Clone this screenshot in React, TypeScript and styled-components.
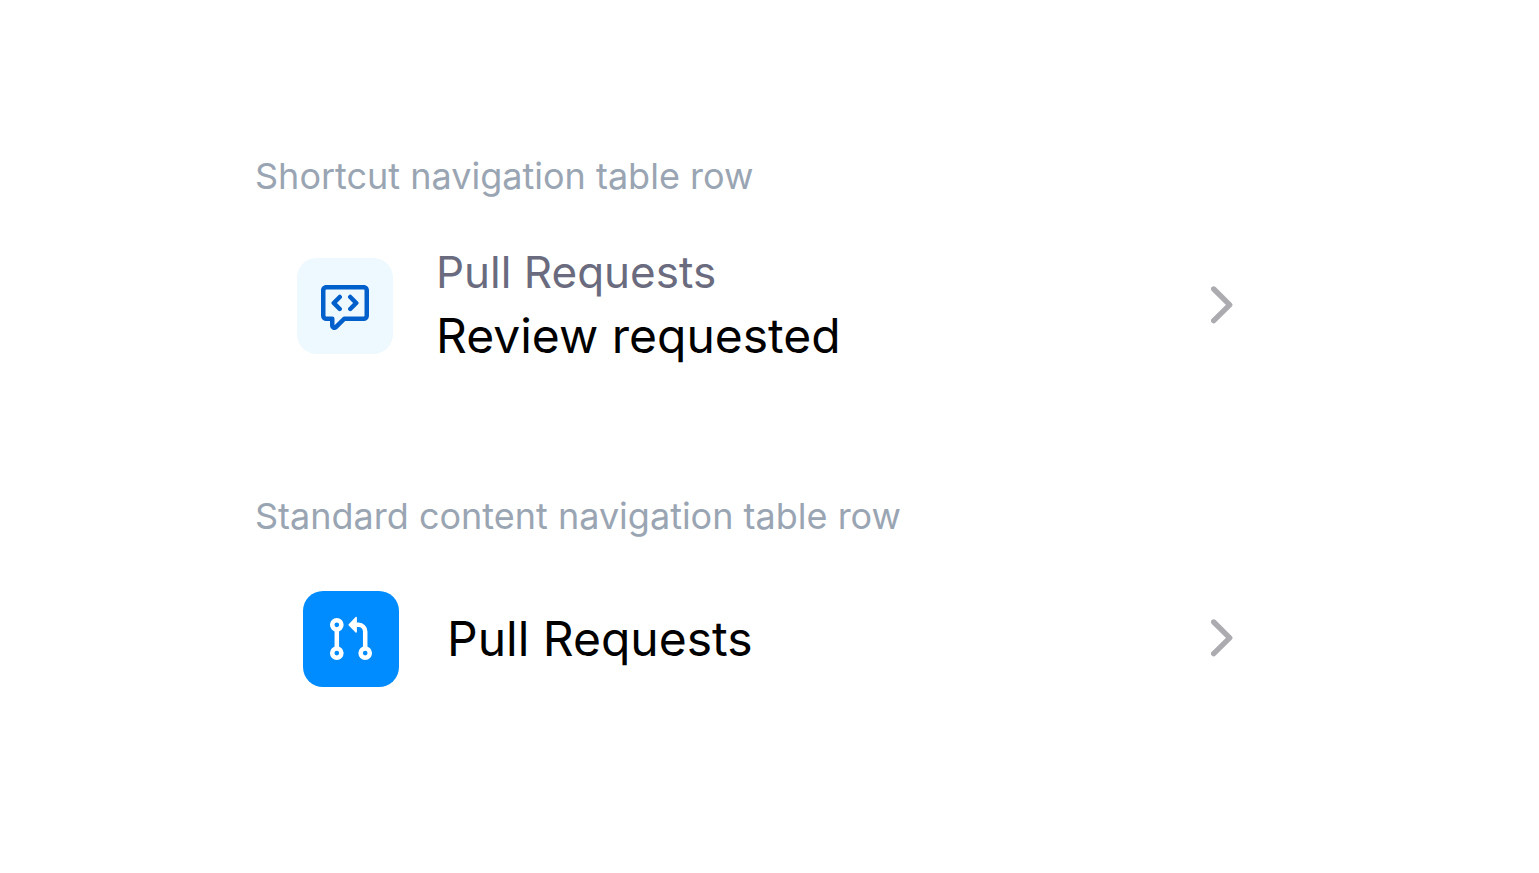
import React from "react";
import styled, { createGlobalStyle } from "styled-components";

const GlobalStyle = createGlobalStyle`
  *, *::before, *::after {
    box-sizing: border-box;
  }
  body {
    margin: 0;
    background: #ffffff;
    font-family: Inter, "Liberation Sans", sans-serif;
  }
`;

const Page = styled.main`
  display: flex;
  flex-direction: column;
  gap: 120px;
  padding: 152px 306px 120px 255px;
`;

const Example = styled.section`
  display: flex;
  flex-direction: column;
  gap: 40px;
`;

const Caption = styled.h2`
  margin: 0;
  color: #9aa5b3;
  font-size: 36px;
  font-weight: 400;
  line-height: 48px;
  white-space: nowrap;
`;

const Row = styled.a<{ $inset: number; $gap: number }>`
  display: flex;
  align-items: center;
  gap: ${({ $gap }) => $gap}px;
  min-height: 118px;
  padding-left: ${({ $inset }) => $inset}px;
  color: #000000;
  text-decoration: none;
`;

const IconTile = styled.span<{ $background: string; $color: string }>`
  display: flex;
  flex: none;
  align-items: center;
  justify-content: center;
  width: 96px;
  height: 96px;
  border-radius: 20px;
  background: ${({ $background }) => $background};
  color: ${({ $color }) => $color};
`;

const Labels = styled.span<{ $stacked?: boolean }>`
  display: flex;
  flex: 1;
  flex-direction: column;
  padding-bottom: ${({ $stacked }) => ($stacked ? 4 : 0)}px;
  white-space: nowrap;
`;

const Subtitle = styled.span`
  color: #6a6b7e;
  font-size: 44px;
  line-height: 64px;
`;

const Title = styled.span`
  font-size: 48px;
  line-height: 64px;
`;

const ChevronSvg = styled.svg`
  flex: none;
`;

function CodeReviewIcon() {
  return (
    <svg width="48" height="48" viewBox="0 0 16 16" fill="currentColor" aria-hidden="true">
      <path d="M1.75 1h12.5c.966 0 1.75.784 1.75 1.75v8.5A1.75 1.75 0 0 1 14.25 13H8.061l-2.574 2.573A1.458 1.458 0 0 1 3 14.543V13H1.75A1.75 1.75 0 0 1 0 11.25v-8.5C0 1.784.784 1 1.75 1ZM1.5 2.75v8.5c0 .138.112.25.25.25h2a.75.75 0 0 1 .75.75v2.19l2.72-2.72a.749.749 0 0 1 .53-.22h6.5a.25.25 0 0 0 .25-.25v-8.5a.25.25 0 0 0-.25-.25H1.75a.25.25 0 0 0-.25.25Zm5.28 1.72a.75.75 0 0 1 0 1.06L5.31 7l1.47 1.47a.751.751 0 0 1-.018 1.042.751.751 0 0 1-1.042.018l-2-2a.75.75 0 0 1 0-1.06l2-2a.75.75 0 0 1 1.06 0Zm2.44 0a.75.75 0 0 1 1.06 0l2 2a.75.75 0 0 1 0 1.06l-2 2a.751.751 0 0 1-1.042-.018.751.751 0 0 1-.018-1.042L10.69 7 9.22 5.53a.75.75 0 0 1 0-1.06Z" />
    </svg>
  );
}

function PullRequestIcon() {
  return (
    <svg width="48" height="48" viewBox="0 0 48 48" fill="none" stroke="currentColor" strokeWidth="4.5" aria-hidden="true">
      <circle cx="9.8" cy="9.8" r="4.6" />
      <circle cx="9.8" cy="38.1" r="4.6" />
      <circle cx="38.2" cy="38.1" r="4.6" />
      <path d="M9.8 14v20M38.2 34V16.4a6.6 6.6 0 0 0-6.6-6.6H28" />
      <path
        d="M29.9 2.6v14.4c0 .8-.8 1.1-1.3.6l-6.9-7.2a.9.9 0 0 1 0-1.2l6.9-7.2c.5-.5 1.3-.2 1.3.6Z"
        fill="currentColor"
        stroke="none"
      />
    </svg>
  );
}

function Chevron() {
  return (
    <ChevronSvg
      width="22"
      height="40"
      viewBox="0 0 22 40"
      fill="none"
      stroke="#acacb0"
      strokeWidth="5.4"
      strokeLinecap="round"
      strokeLinejoin="round"
      aria-hidden="true"
    >
      <path d="M2.7 3l16 15.8-16 15.8" />
    </ChevronSvg>
  );
}

export default function App() {
  return (
    <>
      <GlobalStyle />
      <Page>
        <Example>
          <Caption>Shortcut navigation table row</Caption>
          <Row href="#review-requested" $inset={42} $gap={43}>
            <IconTile $background="#eef8ff" $color="#0060cb">
              <CodeReviewIcon />
            </IconTile>
            <Labels $stacked>
              <Subtitle>Pull Requests</Subtitle>
              <Title>Review requested</Title>
            </Labels>
            <Chevron />
          </Row>
        </Example>
        <Example>
          <Caption>Standard content navigation table row</Caption>
          <Row href="#pull-requests" $inset={48} $gap={48}>
            <IconTile $background="#008cff" $color="#ffffff">
              <PullRequestIcon />
            </IconTile>
            <Labels>
              <Title>Pull Requests</Title>
            </Labels>
            <Chevron />
          </Row>
        </Example>
      </Page>
    </>
  );
}
